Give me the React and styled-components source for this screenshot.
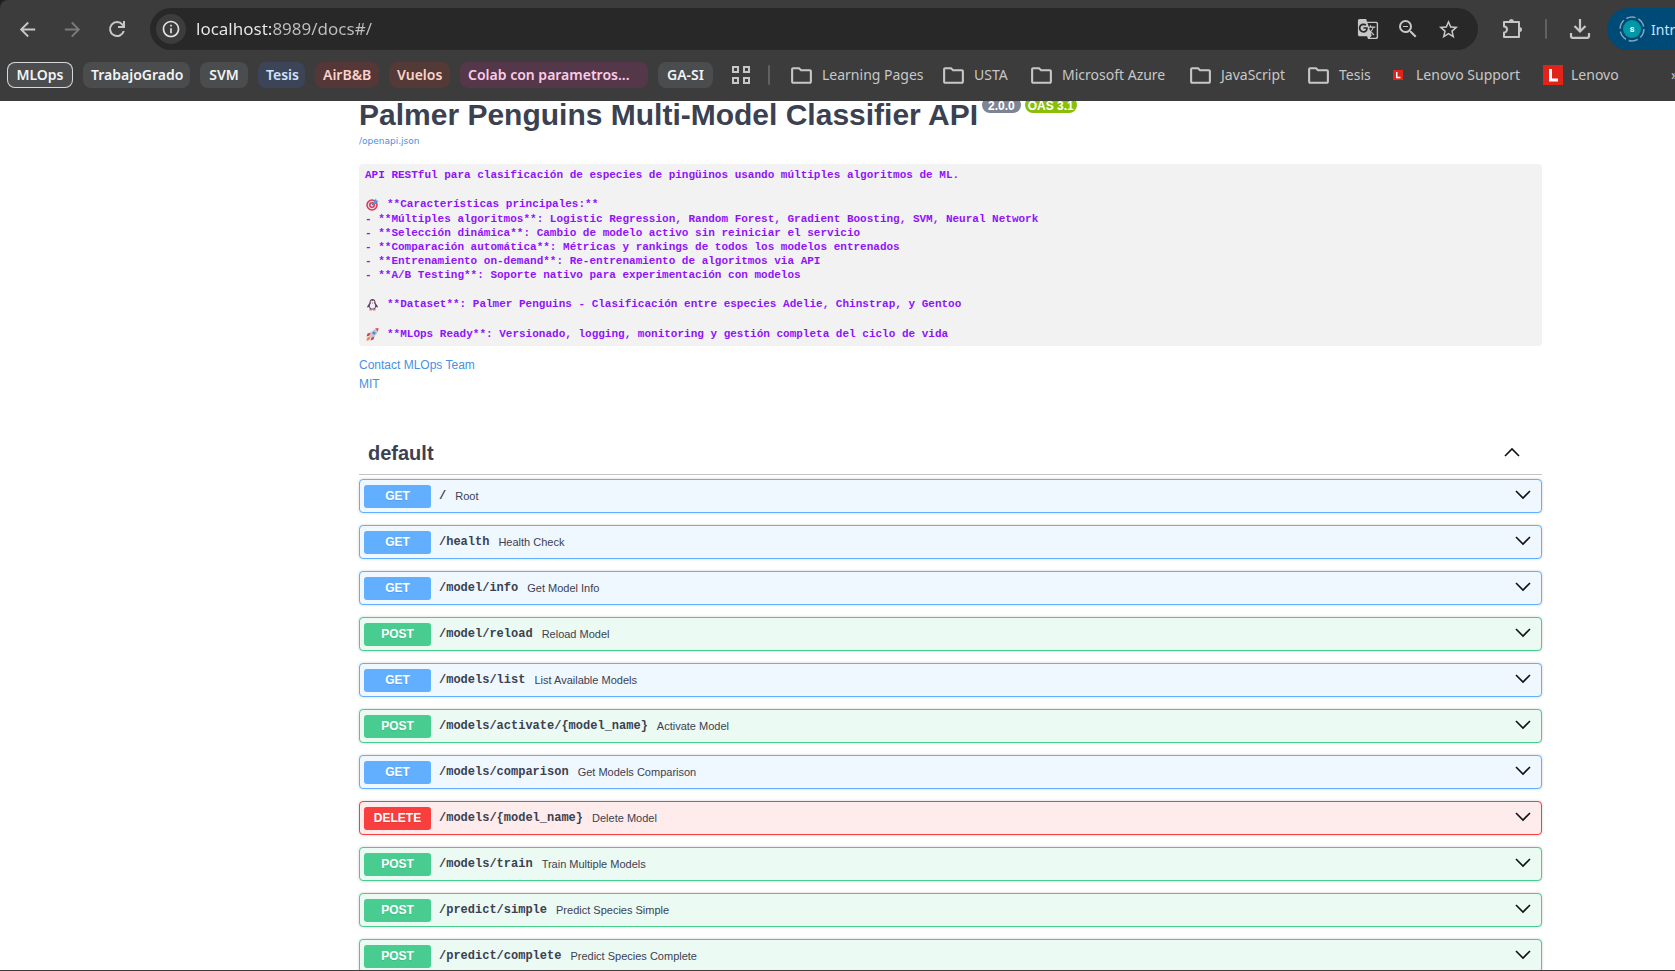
import React, { useState } from "react";
import styled, { createGlobalStyle, css } from "styled-components";
import {
  MdArrowBack,
  MdArrowForward,
  MdInfoOutline,
  MdGTranslate,
  MdZoomOut,
  MdStarBorder,
  MdOutlineFolder,
} from "react-icons/md";

const sans = `"Liberation Sans", Arial, sans-serif`;
const mono = `"Liberation Mono", Consolas, monospace`;
const chrome = `"Segoe UI", "Noto Sans", "Open Sans", sans-serif`;

const GlobalStyle = createGlobalStyle`
  *, *::before, *::after { box-sizing: border-box; }
  body { margin: 0; background: #fff; color: #3b4151; font-family: ${sans}; }
  button { font: inherit; color: inherit; border: 0; background: none; padding: 0; cursor: pointer; }
  a { text-decoration: none; }
  svg { flex: none; }
`;

const Window = styled.div`
  height: 100vh;
  display: flex;
  flex-direction: column;
  overflow: hidden;
  background: #1f1f1f;
  border-bottom: 1px solid #3c3c3c;
`;

const BrowserBar = styled.header`
  flex: none;
  height: 101px;
  overflow: hidden;
  background: #3c3c3c;
  border-top-left-radius: 8px;
  font-family: ${chrome};
  color: #c7c7c7;
`;

const AddressRow = styled.div`
  height: 58px;
  display: flex;
  align-items: center;
  padding-left: 11px;
`;

const NavButtons = styled.nav`
  display: flex;
  gap: 13px;
  margin-right: 17px;
`;

const IconButton = styled.button`
  width: 32px;
  height: 32px;
  flex: none;
  display: grid;
  place-items: center;
  color: ${(p) => (p.disabled ? "#7a7a7a" : "#c7c7c7")};
`;

const AddressBox = styled.div`
  flex: 1;
  min-width: 0;
  height: 42px;
  display: flex;
  align-items: center;
  gap: 8px;
  padding: 0 14px 0 6px;
  border-radius: 21px;
  background: #282828;
`;

const SiteInfo = styled(IconButton)`
  width: 30px;
  height: 30px;
  border-radius: 50%;
  background: #3c3c3c;
  color: #e3e3e3;
`;

const UrlInput = styled.input`
  flex: 1;
  min-width: 0;
  border: 0;
  padding: 0 2px;
  outline: 0;
  background: linear-gradient(90deg, #ececec 0 79px, #c0c0c0 79px);
  background-clip: text;
  color: transparent;
  caret-color: #ececec;
  font: inherit;
  font-size: 17px;
  line-height: 24px;
`;

const AddressActions = styled.div`
  display: flex;
  gap: 8px;
`;

const ToolbarActions = styled.div`
  flex: none;
  display: flex;
  align-items: center;
  margin-left: 18px;
`;

const Separator = styled.span`
  flex: none;
  width: 2px;
  height: 20px;
  margin: 0 ${(p) => p.$after || 17}px 0 17px;
  border-radius: 1px;
  background: #616161;
`;

const ProfileButton = styled.button`
  width: 68px;
  height: 42px;
  margin-left: 11px;
  padding-left: 12px;
  display: flex;
  align-items: center;
  justify-content: flex-start;
  gap: 6px;
  overflow: hidden;
  white-space: nowrap;
  border-radius: 21px 0 0 21px;
  background: #004a77;
  color: #c2e7ff;
  font-size: 14px;
`;

const BookmarkRow = styled.div`
  display: flex;
  align-items: center;
  height: 34px;
  padding-left: 7px;
  font-size: 14px;
  line-height: 24px;
  white-space: nowrap;
`;

const Groups = styled.div`
  display: flex;
  gap: 10px;
`;

const groupTones = {
  grey: ["#4a4c4e", "#f1f3f4"],
  blue: ["#3c4457", "#cfe3ff"],
  red: ["#553737", "#fcd0cc"],
  orange: ["#533a36", "#fbd3c6"],
  pink: ["#543748", "#fbcbe8"],
};

const GroupChip = styled.button`
  width: ${(p) => p.$width}px;
  height: 26px;
  padding: 0 8px;
  overflow: hidden;
  text-align: ${(p) => (p.$width > 150 ? "left" : "center")};
  border-radius: 8px;
  font-weight: 600;
  line-height: 24px;
  background: ${(p) => groupTones[p.$tone][0]};
  color: ${(p) => groupTones[p.$tone][1]};
  ${(p) =>
    p.$open &&
    css`
      box-shadow: inset 0 0 0 1px #d8d8d8;
    `}
`;

const Bookmark = styled.a`
  width: ${(p) => p.$width}px;
  display: flex;
  align-items: center;
  gap: ${(p) => p.$gap || 8}px;
  color: #c7c7c7;
  flex: none;
`;

const AppsButton = styled(IconButton)`
  width: 20px;
  margin-left: 18px;
`;

const Viewport = styled.main`
  flex: 1;
  min-height: 0;
  overflow: hidden;
  background: #fff;
  padding: 0 133px 0 359px;
`;

const TitleRow = styled.div`
  display: flex;
  align-items: flex-start;
  gap: 4px;
`;

const Title = styled.h1`
  margin: -3px 0 0;
  font-size: 30px;
  line-height: 34px;
  color: #3b4151;
`;

const VersionBadge = styled.span`
  margin-top: -4px;
  height: 16px;
  padding: 0 ${(p) => (p.$oas ? 3 : 6)}px;
  border-radius: 8px;
  background: ${(p) => (p.$oas ? "#89bf04" : "#7d8492")};
  color: #fff;
  font-size: 12px;
  font-weight: 700;
  line-height: 18px;
`;

const SpecLink = styled.a`
  display: block;
  margin-top: 2px;
  font-family: "DejaVu Sans", ${sans};
  font-size: 9px;
  line-height: 14px;
  color: #4990e2;
`;

const Description = styled.pre`
  margin: 16px 0 10px;
  padding: 4px 6px;
  border-radius: 4px;
  overflow: hidden;
  background: #f2f2f2;
  color: #9012fe;
  font-family: ${mono};
  font-size: 11px;
  font-weight: 600;
`;

const DescriptionLine = styled.span`
  display: flex;
  align-items: center;
  gap: 8px;
  height: ${(p) => (p.$icon ? 16 : 14)}px;
  padding-left: ${(p) => (p.$icon ? 1 : 0)}px;
  line-height: 14px;
`;

const InfoLink = styled.a`
  display: block;
  width: fit-content;
  font-size: 12px;
  line-height: 19px;
  color: #4990e2;
`;

const TagHeader = styled.button`
  width: 100%;
  height: 44px;
  margin: 37px 0 4px;
  padding: 1px 22px 0 9px;
  display: flex;
  align-items: center;
  justify-content: space-between;
  border-bottom: 1px solid #c4c6cb;
  font-size: 20px;
  font-weight: 700;
`;

const Operations = styled.div`
  display: flex;
  flex-direction: column;
  gap: 12px;
`;

const methods = {
  GET: ["#61affe", "#eff7ff"],
  POST: ["#49cc90", "#ebfaf3"],
  DELETE: ["#f93e3e", "#feebeb"],
};

const Operation = styled.button`
  width: 100%;
  height: 34px;
  padding: 0 10px 0 4px;
  display: flex;
  align-items: center;
  border: 1px solid ${(p) => methods[p.$method][0]};
  border-radius: 4px;
  background: ${(p) => methods[p.$method][1]};
  box-shadow: 0 0 3px rgba(0, 0, 0, 0.19);
  text-align: left;
`;

const Method = styled.span`
  width: 67px;
  flex: none;
  border-radius: 3px;
  background: ${(p) => methods[p.$method][0]};
  color: #fff;
  font-size: 12px;
  font-weight: 700;
  line-height: 23px;
  text-align: center;
  text-shadow: 0 1px 0 rgba(0, 0, 0, 0.1);
`;

const Path = styled.span`
  padding: 0 9px 0 8px;
  font-family: ${mono};
  font-size: 12px;
  font-weight: 600;
`;

const Summary = styled.span`
  flex: 1;
  font-size: 11px;
`;

function Chevron({ up }) {
  return (
    <svg width="16" height="14" viewBox="0 0 16 14" fill="none" stroke="#111" strokeWidth="1.6" aria-hidden="true">
      <path d={up ? "M1 10 8 3 15 10" : "M1 2 8 9 15 2"} />
    </svg>
  );
}

function ReloadIcon() {
  return (
    <svg width="20" height="20" viewBox="0 0 20 20" fill="none" stroke="#c7c7c7" strokeWidth="2" aria-hidden="true">
      <path d="M16.800 12A7 7 0 1 1 15.500 5.600L17 7.500" />
      <path d="M17 2v6h-6" />
    </svg>
  );
}

function DownloadIcon() {
  return (
    <svg width="22" height="22" viewBox="0 0 22 22" fill="none" stroke="#c7c7c7" strokeWidth="2.200" aria-hidden="true">
      <path d="M11 1v12M5.500 8 11 13.500 16.500 8" />
      <path d="M2 15v3a1.800 1.800 0 0 0 1.800 1.800h14.400A1.800 1.800 0 0 0 20 18v-3" />
    </svg>
  );
}

function AppsIcon() {
  return (
    <svg width="20" height="20" viewBox="0 0 20 20" fill="none" stroke="#c7c7c7" strokeWidth="2" aria-hidden="true">
      <path d="M2 2h5v5H2zM13 2h5v5h-5zM2 13h5v5H2zM13 13h5v5h-5z" />
    </svg>
  );
}

function PuzzleIcon() {
  return (
    <svg width="24" height="24" viewBox="0 0 24 24" fill="none" stroke="#c7c7c7" strokeWidth="2" strokeLinejoin="round" aria-hidden="true">
      <path d="M4 5h15v15H4v-4.500a3 3 0 0 0 0-6z" />
      <path d="M9 4.500a2.500 2.500 0 0 1 5 0zM19.500 10a2.500 2.500 0 0 1 0 5z" fill="#c7c7c7" stroke="none" />
    </svg>
  );
}

function ProfileIcon() {
  return (
    <svg width="26" height="26" viewBox="0 0 26 26" aria-hidden="true">
      <circle cx="13" cy="13" r="11.900" fill="none" stroke="#7fa5ba" strokeWidth="1.500" strokeDasharray="9.500 2.960" />
      <circle cx="13" cy="13" r="9" fill="#0097a7" />
      <text x="13" y="16" textAnchor="middle" fontFamily="Roboto, sans-serif" fontSize="9" fontWeight="700" fill="#fff">s</text>
    </svg>
  );
}

function LenovoIcon({ size }) {
  return (
    <svg width={size} height={size} viewBox="0 0 20 20" aria-hidden="true">
      <path d="M0 0h20v20H0z" fill="#e2231a" />
      <path d="M7.500 4v11H15" fill="none" stroke="#fff" strokeWidth="3" />
    </svg>
  );
}

function TargetIcon() {
  return (
    <svg width="13" height="13" viewBox="0 0 26 26" role="img" aria-label="🎯">
      <circle cx="12" cy="14" r="11.500" fill="#d13b5c" />
      <circle cx="12" cy="14" r="8.500" fill="#f3d9df" />
      <circle cx="12" cy="14" r="6" fill="#d13b5c" />
      <circle cx="12" cy="14" r="3" fill="#f3d9df" />
      <path d="M12 14 20 6" stroke="#2b6ca8" strokeWidth="2" />
      <path d="m15 8 5-7 1 4 4 1-6 6-4 0z" fill="#3ba0dc" />
    </svg>
  );
}

function PenguinIcon() {
  return (
    <svg width="13" height="13" viewBox="0 0 26 26" role="img" aria-label="🐧">
      <path d="M13 2c4 0 6 3 6 7 0 2 5 6 5 10l-4-1c-1 4-3 5-7 5s-6-1-7-5l-4 1c0-4 5-8 5-10 0-4 2-7 6-7z" fill="#584467" />
      <path d="M13 6c3-3 5 1 3 4 2 3 3 5 2 8-1 4-9 4-10 0-1-3 0-5 2-8-2-3 0-7 3-4z" fill="#f4edf5" />
      <path d="m11 9 4 0-2 3zM7 22h5v3H7zM14 22h5v3h-5z" fill="#e8763d" />
    </svg>
  );
}

function RocketIcon() {
  return (
    <svg width="13" height="13" viewBox="0 0 26 26" role="img" aria-label="🚀">
      <path d="m10 9-7 2-2 6 7-2zM17 16l-2 7-6 2 2-7z" fill="#d13b5c" />
      <path d="M6 16c3-8 8-13 14-14l4 4c-1 6-6 11-14 14z" fill="#c9c4d3" />
      <path d="m18 1 7-1-1 7z" fill="#e5405e" />
      <circle cx="16" cy="10" r="3" fill="#3b8ed0" />
      <path d="m6 17 3 3-3 4-5 2 1-6z" fill="#f08a3c" />
    </svg>
  );
}

const groups = [
  ["MLOps", 66, "grey", true],
  ["TrabajoGrado", 107, "grey"],
  ["SVM", 48, "grey"],
  ["Tesis", 47, "blue"],
  ["AirB&B", 64, "red"],
  ["Vuelos", 61, "orange"],
  ["Colab con parametros...", 188, "pink"],
  ["GA-SI", 55, "grey"],
];

const bookmarks = [
  ["Learning Pages", 152],
  ["USTA", 88],
  ["Microsoft Azure", 159],
  ["JavaScript", 118],
  ["Tesis", 87],
];

const description = [
  ["API RESTful para clasificación de especies de pingüinos usando múltiples algoritmos de ML."],
  [""],
  ["**Características principales:**", TargetIcon],
  ["- **Múltiples algoritmos**: Logistic Regression, Random Forest, Gradient Boosting, SVM, Neural Network"],
  ["- **Selección dinámica**: Cambio de modelo activo sin reiniciar el servicio"],
  ["- **Comparación automática**: Métricas y rankings de todos los modelos entrenados"],
  ["- **Entrenamiento on-demand**: Re-entrenamiento de algoritmos via API"],
  ["- **A/B Testing**: Soporte nativo para experimentación con modelos"],
  [""],
  ["**Dataset**: Palmer Penguins - Clasificación entre especies Adelie, Chinstrap, y Gentoo", PenguinIcon],
  [""],
  ["**MLOps Ready**: Versionado, logging, monitoring y gestión completa del ciclo de vida", RocketIcon],
];

const operations = [
  ["GET", "/", "Root"],
  ["GET", "/health", "Health Check"],
  ["GET", "/model/info", "Get Model Info"],
  ["POST", "/model/reload", "Reload Model"],
  ["GET", "/models/list", "List Available Models"],
  ["POST", "/models/activate/{model_name}", "Activate Model"],
  ["GET", "/models/comparison", "Get Models Comparison"],
  ["DELETE", "/models/{model_name}", "Delete Model"],
  ["POST", "/models/train", "Train Multiple Models"],
  ["POST", "/predict/simple", "Predict Species Simple"],
  ["POST", "/predict/complete", "Predict Species Complete"],
];

export default function App() {
  const [url, setUrl] = useState("localhost:8989/docs#/");
  const [open, setOpen] = useState(true);

  return (
    <>
      <GlobalStyle />
      <Window>
        <BrowserBar>
          <AddressRow>
            <NavButtons>
              <IconButton aria-label="Back"><MdArrowBack size={23} /></IconButton>
              <IconButton aria-label="Forward" disabled><MdArrowForward size={23} /></IconButton>
              <IconButton aria-label="Reload"><ReloadIcon /></IconButton>
            </NavButtons>
            <AddressBox>
              <SiteInfo aria-label="Site information"><MdInfoOutline size={20} /></SiteInfo>
              <UrlInput aria-label="Address" value={url} onChange={(e) => setUrl(e.target.value)} />
              <AddressActions>
                <IconButton aria-label="Translate"><MdGTranslate size={22} /></IconButton>
                <IconButton aria-label="Zoom"><MdZoomOut size={24} /></IconButton>
                <IconButton aria-label="Bookmark"><MdStarBorder size={23} /></IconButton>
              </AddressActions>
            </AddressBox>
            <ToolbarActions>
              <IconButton aria-label="Extensions"><PuzzleIcon /></IconButton>
              <Separator />
              <IconButton aria-label="Downloads"><DownloadIcon /></IconButton>
              <ProfileButton><ProfileIcon />Intro</ProfileButton>
            </ToolbarActions>
          </AddressRow>
          <BookmarkRow>
            <Groups>
              {groups.map(([label, width, tone, isOpen]) => (
                <GroupChip key={label} $width={width} $tone={tone} $open={isOpen}>{label}</GroupChip>
              ))}
            </Groups>
            <AppsButton aria-label="Apps"><AppsIcon /></AppsButton>
            <Separator $after={19} />
            {bookmarks.map(([label, width]) => (
              <Bookmark key={label} href="#" $width={width}>
                <MdOutlineFolder size={25} />{label}
              </Bookmark>
            ))}
            <Bookmark href="#" $width={150} $gap={13}><LenovoIcon size={10} />Lenovo Support</Bookmark>
            <Bookmark href="#" $width={128}><LenovoIcon size={20} />Lenovo</Bookmark>
            <span>»</span>
          </BookmarkRow>
        </BrowserBar>
        <Viewport>
          <TitleRow>
            <Title>Palmer Penguins Multi-Model Classifier API</Title>
            <VersionBadge>2.0.0</VersionBadge>
            <VersionBadge $oas>OAS 3.1</VersionBadge>
          </TitleRow>
          <SpecLink href="#">/openapi.json</SpecLink>
          <Description>
            {description.map(([text, Icon], i) => (
              <DescriptionLine key={i} $icon={Boolean(Icon)}>
                {Icon && <Icon />}
                {text}
              </DescriptionLine>
            ))}
          </Description>
          <InfoLink href="#">Contact MLOps Team</InfoLink>
          <InfoLink href="#">MIT</InfoLink>
          <TagHeader aria-expanded={open} onClick={() => setOpen(!open)}>
            default
            <Chevron up={open} />
          </TagHeader>
          {open && (
            <Operations>
              {operations.map(([method, path, summary]) => (
                <Operation key={path} $method={method}>
                  <Method $method={method}>{method}</Method>
                  <Path>{path}</Path>
                  <Summary>{summary}</Summary>
                  <Chevron />
                </Operation>
              ))}
            </Operations>
          )}
        </Viewport>
      </Window>
    </>
  );
}
